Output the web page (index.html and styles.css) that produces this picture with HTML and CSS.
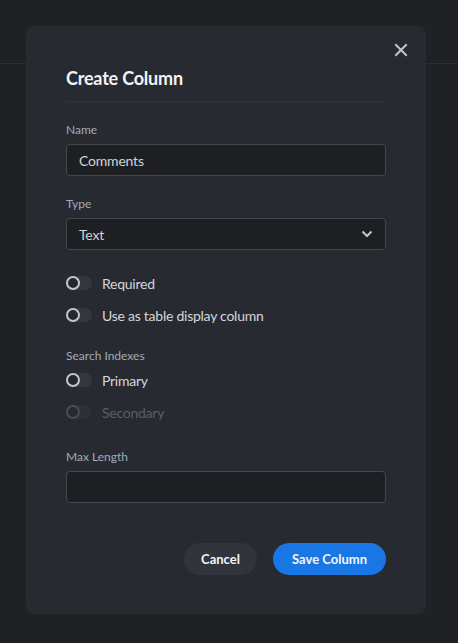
FILE: index.html
```html
<!DOCTYPE html>
<html lang="en">
<head>
<meta charset="utf-8">
<title>Create Column</title>
<link rel="stylesheet" href="styles.css">
</head>
<body>
<header class="topbar"></header>
<div class="modal" role="dialog">
  <button class="close" aria-label="Close">
    <svg width="14" height="14" viewBox="0 0 14 14"><path d="M2 2 L12 12 M12 2 L2 12" stroke="#c3c6cc" stroke-width="2" stroke-linecap="square"/></svg>
  </button>
  <h2 class="title">Create Column</h2>
  <div class="field first">
    <label class="label">Name</label>
    <div class="input">Comments</div>
  </div>
  <div class="field">
    <label class="label">Type</label>
    <div class="input select">
      <span>Text</span>
      <svg width="12" height="8" viewBox="0 0 12 8"><path d="M1.5 1.5 L6 6 L10.5 1.5" fill="none" stroke="#c3c6cc" stroke-width="2"/></svg>
    </div>
  </div>
  <div class="toggles">
    <div class="toggle-row"><span class="toggle"><span class="knob"></span></span><span>Required</span></div>
    <div class="toggle-row"><span class="toggle"><span class="knob"></span></span><span>Use as table display column</span></div>
  </div>
  <div class="section">
    <div class="label">Search Indexes</div>
    <div class="toggles tight">
      <div class="toggle-row"><span class="toggle"><span class="knob"></span></span><span>Primary</span></div>
      <div class="toggle-row disabled"><span class="toggle"><span class="knob"></span></span><span>Secondary</span></div>
    </div>
  </div>
  <div class="field max">
    <label class="label">Max Length</label>
    <div class="input"></div>
  </div>
  <div class="actions">
    <button class="btn cancel">Cancel</button>
    <button class="btn save">Save Column</button>
  </div>
</div>
</body>
</html>
```
FILE: styles.css
```css
* { box-sizing: border-box; }
html, body { margin: 0; padding: 0; }
body {
  background: #1f2125;
  font-family: "Lato", "Liberation Sans", sans-serif;
  color: #d4d7dc;
  height: 643px;
  overflow: hidden;
}
.topbar {
  height: 64px;
  border-bottom: 1px solid #2c2f35;
}
.modal {
  position: fixed;
  top: 26px;
  left: 26px;
  width: 400px;
  background: #282a31;
  border-radius: 8px;
  padding: 40px 40px 39px;
}
.close {
  position: absolute;
  top: 17px;
  right: 18px;
  width: 14px;
  height: 14px;
  padding: 0;
  border: 0;
  background: none;
  display: flex;
}
.title {
  margin: 0;
  font-size: 18px;
  line-height: 24px;
  font-weight: 700;
  letter-spacing: -0.2px;
  color: #f2f3f5;
  padding-bottom: 11px;
  border-bottom: 1px solid #31343b;
}
.field { display: flex; flex-direction: column; gap: 6px; margin-top: 20px; }
.field.max { margin-top: 27px; }
.label {
  font-size: 12px;
  line-height: 16px;
  color: #a2abb7;
}
.input {
  height: 32px;
  background: #1e1f23;
  border: 1px solid #44474e;
  border-radius: 4px;
  padding: 0 12px;
  display: flex;
  align-items: center;
  font-size: 14px;
  letter-spacing: -0.2px;
  color: #d0d4da;
}
.select { justify-content: space-between; padding-right: 12px; }
.toggles { display: flex; flex-direction: column; gap: 12px; margin-top: 23px; }
.toggles.tight { margin-top: 6px; }
.section { margin-top: 23px; }
.toggle-row {
  display: flex;
  align-items: center;
  gap: 10px;
  height: 20px;
  font-size: 14px;
  letter-spacing: -0.25px;
  color: #d4d7dc;
}
.toggle {
  width: 26px;
  height: 14px;
  border-radius: 7px;
  background: #34373e;
  display: flex;
  align-items: center;
}
.knob {
  width: 14px;
  height: 14px;
  border-radius: 50%;
  border: 2px solid #c3c6cb;
  background: #25272c;
}
.disabled { color: #5b5f66; }
.disabled .toggle { background: #2e3036; }
.disabled .knob { border-color: #4a4d54; background: #282a30; }
.actions {
  display: flex;
  justify-content: flex-end;
  gap: 16px;
  margin-top: 40px;
}
.btn {
  height: 32px;
  border: 0;
  border-radius: 16px;
  font-family: inherit;
  font-size: 13px;
  font-weight: 700;
  color: #f4f5f7;
  padding: 0 12px;
}
.cancel { background: #31343b; width: 73px; }
.save { background: #1877e5; width: 113px; }
```
